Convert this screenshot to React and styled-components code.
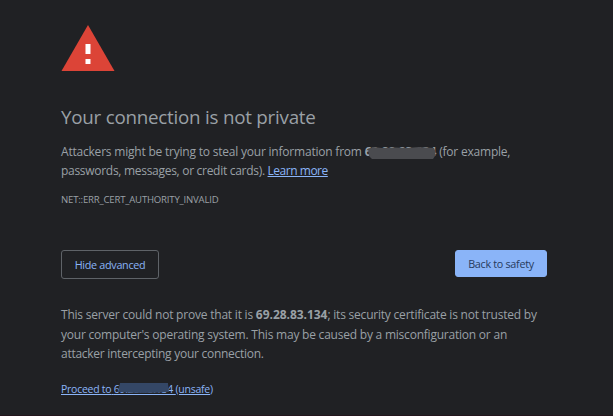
import styled, { createGlobalStyle } from "styled-components";

const GlobalStyle = createGlobalStyle`
  * {
    box-sizing: border-box;
  }

  body {
    margin: 0;
    background: #202124;
    font-family: "Open Sans", "Noto Sans", sans-serif;
  }
`;

const App = () => {
  return (
    <Page>
      <GlobalStyle />
      <WarningIcon viewBox="0 0 54 46" aria-hidden="true">
        <path d="M27 0 L53.5 46 H0.5 Z" fill="#dc4437" />
        <path d="M24.5 19h5v10h-5zM24.5 34h5v5h-5z" fill="#fff" />
      </WarningIcon>

      <Title>Your connection is not private</Title>

      <Message>
        <Line $spacing={-0.21}>
          Attackers might be trying to steal your information from{" "}
          <Redacted>
            <Host>69.28.83.134</Host>
            <Scribble viewBox="0 0 68 13" preserveAspectRatio="none">
              <path
                d="M0 3 L5 1 L14 2 L27 1.5 L39 2 L51 1 L66 2 Q68 5 67 10 L65 13 L4 13 L1 10 Z"
                fill="#4a4b4f"
              />
            </Scribble>
          </Redacted>{" "}
          (for example,
        </Line>
        <Line $spacing={-0.29}>
          passwords, messages, or credit cards).{" "}
          <Link href="#">Learn more</Link>
        </Line>
      </Message>

      <ErrorCode>NET::ERR_CERT_AUTHORITY_INVALID</ErrorCode>

      <Actions>
        <Button>Hide advanced</Button>
        <Button $primary>Back to safety</Button>
      </Actions>

      <Details>
        <Line $spacing={-0.21}>
          This server could not prove that it is <Host>69.28.83.134</Host>; its
          security certificate is not trusted by
        </Line>
        <Line $spacing={-0.22}>
          your computer's operating system. This may be caused by a
          misconfiguration or an
        </Line>
        <Line $spacing={-0.27}>attacker intercepting your connection.</Line>
      </Details>

      <Proceed href="#">
        Proceed to{" "}
        <Redacted>
          69.28.83.134
          <ProceedScribble viewBox="0 0 50 11" preserveAspectRatio="none">
            <path d="M2 0 H49 L50 9 Q25 11 0 9 Z" fill="#344766" />
          </ProceedScribble>
        </Redacted>{" "}
        (unsafe)
      </Proceed>
    </Page>
  );
};

const Page = styled.main`
  display: flex;
  flex-direction: column;
  align-items: flex-start;
  width: 613px;
  height: 416px;
  padding: 25px 66px 0 61px;
  overflow: hidden;
  color: #9aa0a6;
  background: #202124;
  border-bottom: 1px solid #24161d;
`;

const WarningIcon = styled.svg`
  width: 54px;
  height: 46px;
`;

const Title = styled.h1`
  margin: 33px 0 0;
  font-size: 18.8px;
  font-weight: 400;
  letter-spacing: -0.24px;
  line-height: 26px;
  white-space: nowrap;
`;

const Message = styled.p`
  margin: 11.5px 0 0;
  font-size: 12px;
  line-height: 19.5px;
`;

const Line = styled.span`
  display: block;
  letter-spacing: ${({ $spacing }) => $spacing}px;
  white-space: nowrap;
`;

const Host = styled.strong`
  font-weight: 700;
  letter-spacing: -0.04px;
`;

const Redacted = styled.span`
  position: relative;
  display: inline-block;
  text-decoration: inherit;
`;

const Scribble = styled.svg`
  position: absolute;
  top: 4px;
  left: 3px;
  width: 68px;
  height: 13px;
`;

const ProceedScribble = styled(Scribble)`
  top: 2px;
  left: 4px;
  width: 51px;
  height: 11px;
`;

const Link = styled.a`
  color: #8ab4f8;
  letter-spacing: -0.48px;
  text-decoration: underline;
`;

const ErrorCode = styled.div`
  margin-top: 11.5px;
  font-size: 9.6px;
  letter-spacing: -0.2px;
  line-height: 16px;
  white-space: nowrap;
`;

const Actions = styled.div`
  display: flex;
  justify-content: space-between;
  width: 486px;
  margin-top: 42px;
`;

const Button = styled.button`
  width: ${({ $primary }) => ($primary ? "92px" : "98px")};
  height: ${({ $primary }) => ($primary ? "27px" : "29px")};
  padding: 0;
  border: 1px solid ${({ $primary }) => ($primary ? "#8ab4f8" : "#5f6368")};
  border-radius: 3px;
  color: ${({ $primary }) => ($primary ? "#273b5d" : "#8ab4f8")};
  background: ${({ $primary }) => ($primary ? "#8ab4f8" : "transparent")};
  font-family: inherit;
  font-size: 10.8px;
  letter-spacing: -0.3px;
  white-space: nowrap;
`;

const Details = styled.p`
  margin: 26px 0 0;
  font-size: 12px;
  line-height: 19.5px;
`;

const Proceed = styled(Link)`
  margin-top: 17px;
  font-size: 10.5px;
  letter-spacing: -0.26px;
  line-height: 16px;
  white-space: nowrap;
`;

export default App;
